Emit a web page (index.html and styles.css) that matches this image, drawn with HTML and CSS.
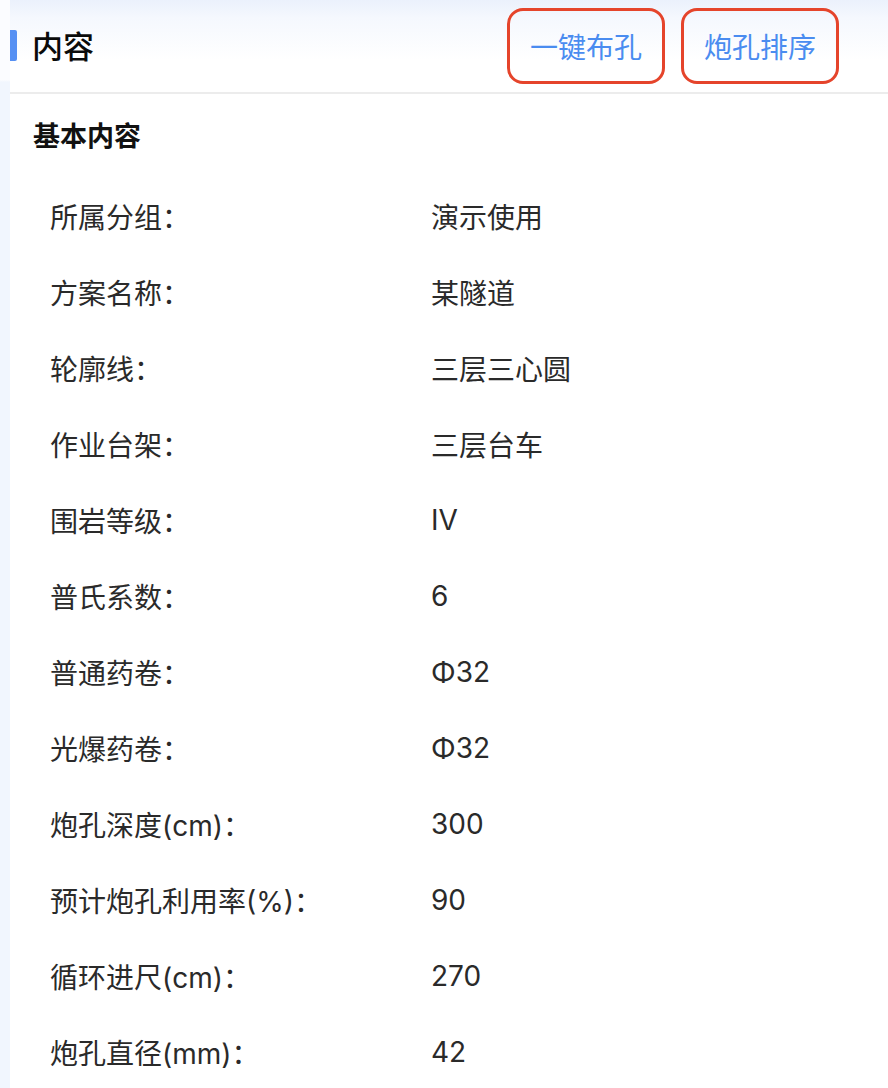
FILE: index.html
```html
<!DOCTYPE html>
<html lang="zh-CN">
<head>
<meta charset="utf-8">
<title>内容</title>
<link rel="stylesheet" href="styles.css">
</head>
<body>
<div class="page">
  <div class="side"></div>
  <div class="main">
    <header class="header">
      <div class="title">
        <span class="bar"></span>
        <h1>内容</h1>
      </div>
      <div class="actions">
        <button class="btn">一键布孔</button>
        <button class="btn">炮孔排序</button>
      </div>
    </header>
    <section class="section">
      <h2>基本内容</h2>
      <dl class="list">
        <div class="row"><dt>所属分组：</dt><dd>演示使用</dd></div>
        <div class="row"><dt>方案名称：</dt><dd>某隧道</dd></div>
        <div class="row"><dt>轮廓线：</dt><dd>三层三心圆</dd></div>
        <div class="row"><dt>作业台架：</dt><dd>三层台车</dd></div>
        <div class="row"><dt>围岩等级：</dt><dd>Ⅳ</dd></div>
        <div class="row"><dt>普氏系数：</dt><dd>6</dd></div>
        <div class="row"><dt>普通药卷：</dt><dd>Φ32</dd></div>
        <div class="row"><dt>光爆药卷：</dt><dd>Φ32</dd></div>
        <div class="row"><dt>炮孔深度(cm)：</dt><dd>300</dd></div>
        <div class="row"><dt>预计炮孔利用率(%)：</dt><dd>90</dd></div>
        <div class="row"><dt>循环进尺(cm)：</dt><dd>270</dd></div>
        <div class="row"><dt>炮孔直径(mm)：</dt><dd>42</dd></div>
      </dl>
    </section>
  </div>
</div>
</body>
</html>
```

FILE: styles.css
```css
* { box-sizing: border-box; }
html, body {
  margin: 0;
  padding: 0;
}
body {
  width: 888px;
  height: 1088px;
  overflow: hidden;
  font-family: "Noto Sans CJK SC", "Noto Sans", sans-serif;
  color: #222;
  background: #f3f7fe;
}
.page {
  display: flex;
  min-height: 1088px;
}
.side {
  width: 10px;
  flex: none;
  background: linear-gradient(#fbfcff 0, #fbfcff 80px, #f1f6fe 82px, #f1f6fe 100%);
}
.main {
  flex: 1;
  background: #fff;
}
.header {
  height: 94px;
  display: flex;
  align-items: center;
  justify-content: space-between;
  border-bottom: 2px solid #ececec;
  background: linear-gradient(#ebf1fc 0, #f5f8fe 18px, #ffffff 60px);
  padding-right: 49px;
}
.title {
  display: flex;
  align-items: center;
  height: 32px;
  margin-top: -2px;
}
.bar {
  width: 7px;
  height: 31px;
  background: #5690f3;
  border-radius: 0 2px 2px 0;
}
.title h1 {
  margin: 0 0 0 15px;
  font-size: 31px;
  font-weight: 500;
  color: #0a0a0a;
  line-height: 34px;
}
.actions {
  display: flex;
  gap: 16px;
  margin-top: -1px;
}
.btn {
  width: 158px;
  height: 76px;
  border: 3px solid #e5442b;
  border-radius: 16px;
  background: transparent;
  color: #4a8cf0;
  font-family: inherit;
  font-size: 28px;
  padding: 0;
}
.section {
  padding: 0 0 0 23px;
}
.section h2 {
  margin: 0;
  padding-top: 24px;
  height: 84px;
  font-size: 27px;
  font-weight: 700;
  line-height: 34px;
  color: #111;
}
.list {
  margin: 0;
  padding: 0 0 0 17px;
}
.row {
  display: flex;
  height: 76px;
  align-items: center;
  font-family: "Inter", "Noto Sans CJK SC", sans-serif;
  font-size: 28px;
  color: #2a2a2a;
}
.row dt {
  width: 381px;
  flex: none;
}
.row dd {
  margin: 0;
}
```
